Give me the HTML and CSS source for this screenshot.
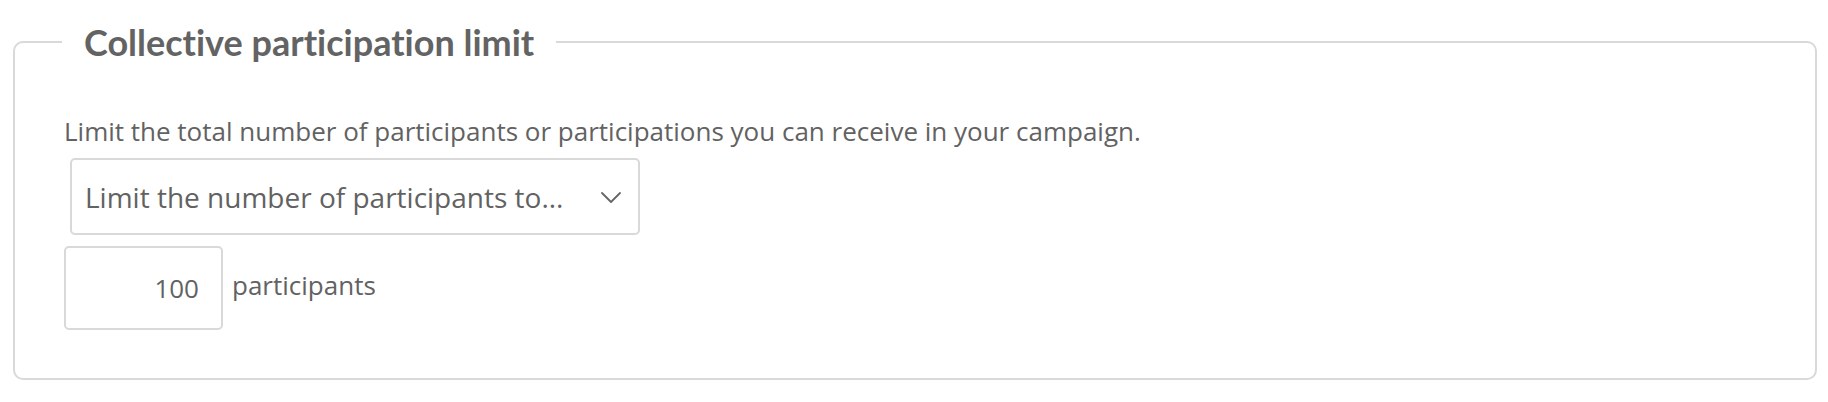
FILE: index.html
```html
<!DOCTYPE html>
<html lang="en">
<head>
<meta charset="utf-8">
<title>Collective participation limit</title>
<link rel="stylesheet" href="styles.css">
</head>
<body>
<fieldset class="panel">
  <legend class="panel-title">Collective participation limit</legend>
  <p class="panel-desc">Limit the total number of participants or participations you can receive in your campaign.</p>
  <div class="select-box">
    <span class="select-value">Limit the number of participants to...</span>
    <svg class="chevron" width="22" height="14" viewBox="0 0 22 14" aria-hidden="true">
      <path d="M2 2 L11 11 L20 2" fill="none" stroke="#666" stroke-width="1.8" stroke-linecap="round" stroke-linejoin="round"/>
    </svg>
  </div>
  <div class="limit-row">
    <input class="limit-input" type="text" value="100">
    <span class="limit-unit">participants</span>
  </div>
</fieldset>
</body>
</html>
```
FILE: styles.css
```css
html, body {
  margin: 0;
  padding: 0;
  background: #ffffff;
}

body {
  font-family: "Open Sans", "Liberation Sans", sans-serif;
  color: #626262;
}

.panel {
  margin: 22px 11px 0 13px;
  padding: 0 20px 48px 49px;
  border: 2px solid #d9d9d9;
  border-radius: 10px;
  min-width: 0;
}

.panel-title {
  margin-left: -2px;
  padding: 0 22px;
  font-family: "Lato", "Liberation Sans", sans-serif;
  font-weight: 700;
  font-size: 36px;
  line-height: 40px;
  color: #636363;
  font-variant-ligatures: none;
  font-feature-settings: "liga" 0, "clig" 0;
}

.panel-desc {
  margin: 52px 0 0 0;
  font-size: 26px;
  line-height: 34px;
  color: #626262;
}

.select-box {
  margin: 10px 0 0 6px;
  width: 570px;
  height: 77px;
  box-sizing: border-box;
  border: 2px solid #d9d9d9;
  border-radius: 5px;
  display: flex;
  align-items: center;
  justify-content: space-between;
  padding: 0 16px 0 13px;
  font-size: 28px;
  color: #626262;
}

.chevron {
  display: block;
  margin-top: 2px;
}

.limit-row {
  margin-top: 11px;
  display: flex;
  align-items: center;
  gap: 9px;
}

.limit-input {
  width: 159px;
  height: 84px;
  box-sizing: border-box;
  border: 2px solid #d9d9d9;
  border-radius: 5px;
  padding: 0 22px 0 10px;
  text-align: right;
  font-family: "Open Sans", "Liberation Sans", sans-serif;
  font-size: 26px;
  color: #626262;
  background: #fff;
  outline: none;
}

.limit-unit {
  font-size: 26px;
  color: #626262;
  margin-top: -6px;
}
```
